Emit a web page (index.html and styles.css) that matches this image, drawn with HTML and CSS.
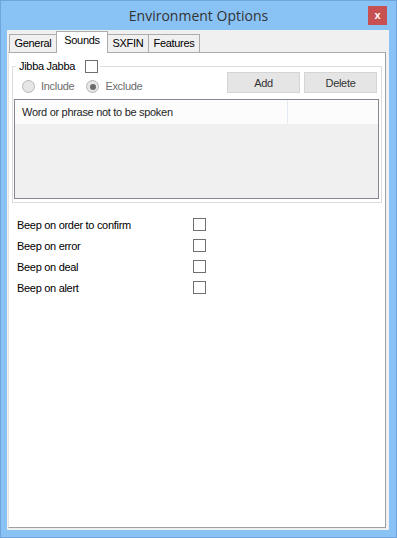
FILE: index.html
```html
<!DOCTYPE html>
<html lang="en">
<head>
    <meta charset="UTF-8">
    <title>Environment Options</title>
    <link rel="stylesheet" href="styles.css">
</head>
<body>
    <div class="window">
        <div class="titlebar">
            <span class="title">Environment Options</span>
            <button class="close" type="button">x</button>
        </div>
        <div class="client">
            <div class="tabs">
                <div class="tab tab-general">General</div>
                <div class="tab tab-sounds active">Sounds</div>
                <div class="tab tab-sxfin">SXFIN</div>
                <div class="tab tab-features">Features</div>
            </div>
            <div class="tabpage">
                <fieldset class="group">
                    <legend><span>Jibba Jabba</span><span class="check"></span></legend>
                    <div class="controls">
                        <label class="radio"><span class="dot"></span>Include</label>
                        <label class="radio"><span class="dot on"></span>Exclude</label>
                        <div class="buttons">
                            <button type="button">Add</button>
                            <button type="button">Delete</button>
                        </div>
                    </div>
                    <div class="listview">
                        <div class="lv-header">
                            <div class="lv-col first">Word or phrase not to be spoken</div>
                            <div class="lv-col"></div>
                        </div>
                    </div>
                </fieldset>

                <div class="options">
                    <div class="option"><span>Beep on order to confirm</span><span class="check"></span></div>
                    <div class="option"><span>Beep on error</span><span class="check"></span></div>
                    <div class="option"><span>Beep on deal</span><span class="check"></span></div>
                    <div class="option"><span>Beep on alert</span><span class="check"></span></div>
                </div>
            </div>
        </div>
    </div>
</body>
</html>
```

FILE: styles.css
```css
body {
    margin: 0;
    font-family: "Liberation Sans", Arial, sans-serif;
    font-size: 11px;
    letter-spacing: -0.3px;
    color: #000;
}
.window {
    width: 397px;
    height: 538px;
    box-sizing: border-box;
    background: #89c2f5;
    border: 1px solid #70a5dc;
    display: flex;
    flex-direction: column;
}
.titlebar {
    height: 29px;
    display: grid;
    grid-template-columns: 1fr auto 1fr;
    align-items: start;
}
.title {
    grid-column: 2;
    font-family: "Open Sans", "Noto Sans", sans-serif;
    font-size: 14px;
    letter-spacing: 0;
    line-height: 29px;
    color: #333;
}
.close {
    grid-column: 3;
    justify-self: end;
    margin: 5px 9px 0 0;
    width: 19px;
    height: 19px;
    padding: 0;
    border: none;
    background: #c75050;
    color: #fff;
    font-family: "Liberation Sans", Arial, sans-serif;
    font-weight: bold;
    font-size: 11px;
    line-height: 17px;
}
.client {
    flex: 1;
    margin: 0 7px 7px 6px;
    background: #f0f0f0;
    display: flex;
    flex-direction: column;
}
.tabs {
    height: 22px;
    display: flex;
    align-items: flex-end;
    padding-left: 2px;
}
.tab {
    height: 18px;
    box-sizing: border-box;
    border: 1px solid #acacac;
    border-bottom: none;
    background: #f0f0f0;
    line-height: 16px;
    text-align: center;
    margin-left: -1px;
}
.tab-general { margin-left: 0; width: 48px; }
.tab-sounds { width: 52px; }
.tab-sxfin { width: 42px; }
.tab-features { width: 52px; }
.tab.active {
    position: relative;
    z-index: 1;
    height: 22px;
    margin-bottom: -1px;
    background: #fff;
}
.tabpage {
    flex: 1;
    background: #fff;
    border: 1px solid #acacac;
    border-left-color: #e3e3e3;
    border-right-color: #a0a0a0;
    border-bottom-color: #a0a0a0;
    margin: 0 3px 2px 1px;
    padding: 7px 3px 0 3px;
}
.group {
    margin: 0;
    min-width: 0;
    border: 1px solid #dcdcdc;
    padding: 0 2px 3px 1px;
}
.group legend {
    display: flex;
    align-items: center;
    gap: 10px;
    height: 13px;
    line-height: 13px;
    margin-left: 2px;
    padding: 0 2px 0 3px;
}
.check {
    display: inline-block;
    width: 13px;
    height: 13px;
    box-sizing: border-box;
    border: 1px solid #707070;
    background: #fff;
}
.controls {
    display: flex;
    align-items: flex-start;
    height: 21px;
    margin-top: -1px;
}
.radio {
    display: flex;
    align-items: center;
    gap: 6px;
    margin-top: 8px;
    margin-left: 8px;
    line-height: 13px;
    color: #6d6d6d;
}
.radio + .radio {
    margin-left: 12px;
}
.dot {
    width: 13px;
    height: 13px;
    box-sizing: border-box;
    border: 1px solid #b5b5b5;
    border-radius: 50%;
    background: #e6e6e6;
    display: flex;
    align-items: center;
    justify-content: center;
}
.dot.on::after {
    content: "";
    width: 6px;
    height: 6px;
    border-radius: 50%;
    background: #6a6a6a;
}
.buttons {
    margin-left: auto;
    margin-right: 2px;
    display: flex;
    gap: 4px;
}
.buttons button {
    width: 73px;
    height: 21px;
    padding: 0;
    border: 1px solid #d5d5d5;
    background: #e5e5e5;
    color: #333;
    font-family: inherit;
    font-size: 11px;
    letter-spacing: -0.3px;
}
.listview {
    margin-top: 6px;
    height: 100px;
    box-sizing: border-box;
    border: 1px solid #828790;
    background: #f0f0f0;
}
.lv-header {
    display: flex;
    height: 24px;
    background: #fcfcfd;
}
.lv-col {
    flex: 1;
    line-height: 25px;
    padding-left: 7px;
    color: #1e1e1e;
}
.lv-col.first {
    flex: none;
    width: 265px;
    border-right: 1px solid #e3eaf3;
}
.options {
    margin: 11px 0 0 5px;
}
.option {
    display: grid;
    grid-template-columns: 176px 13px;
    align-items: center;
    height: 21px;
}
```
